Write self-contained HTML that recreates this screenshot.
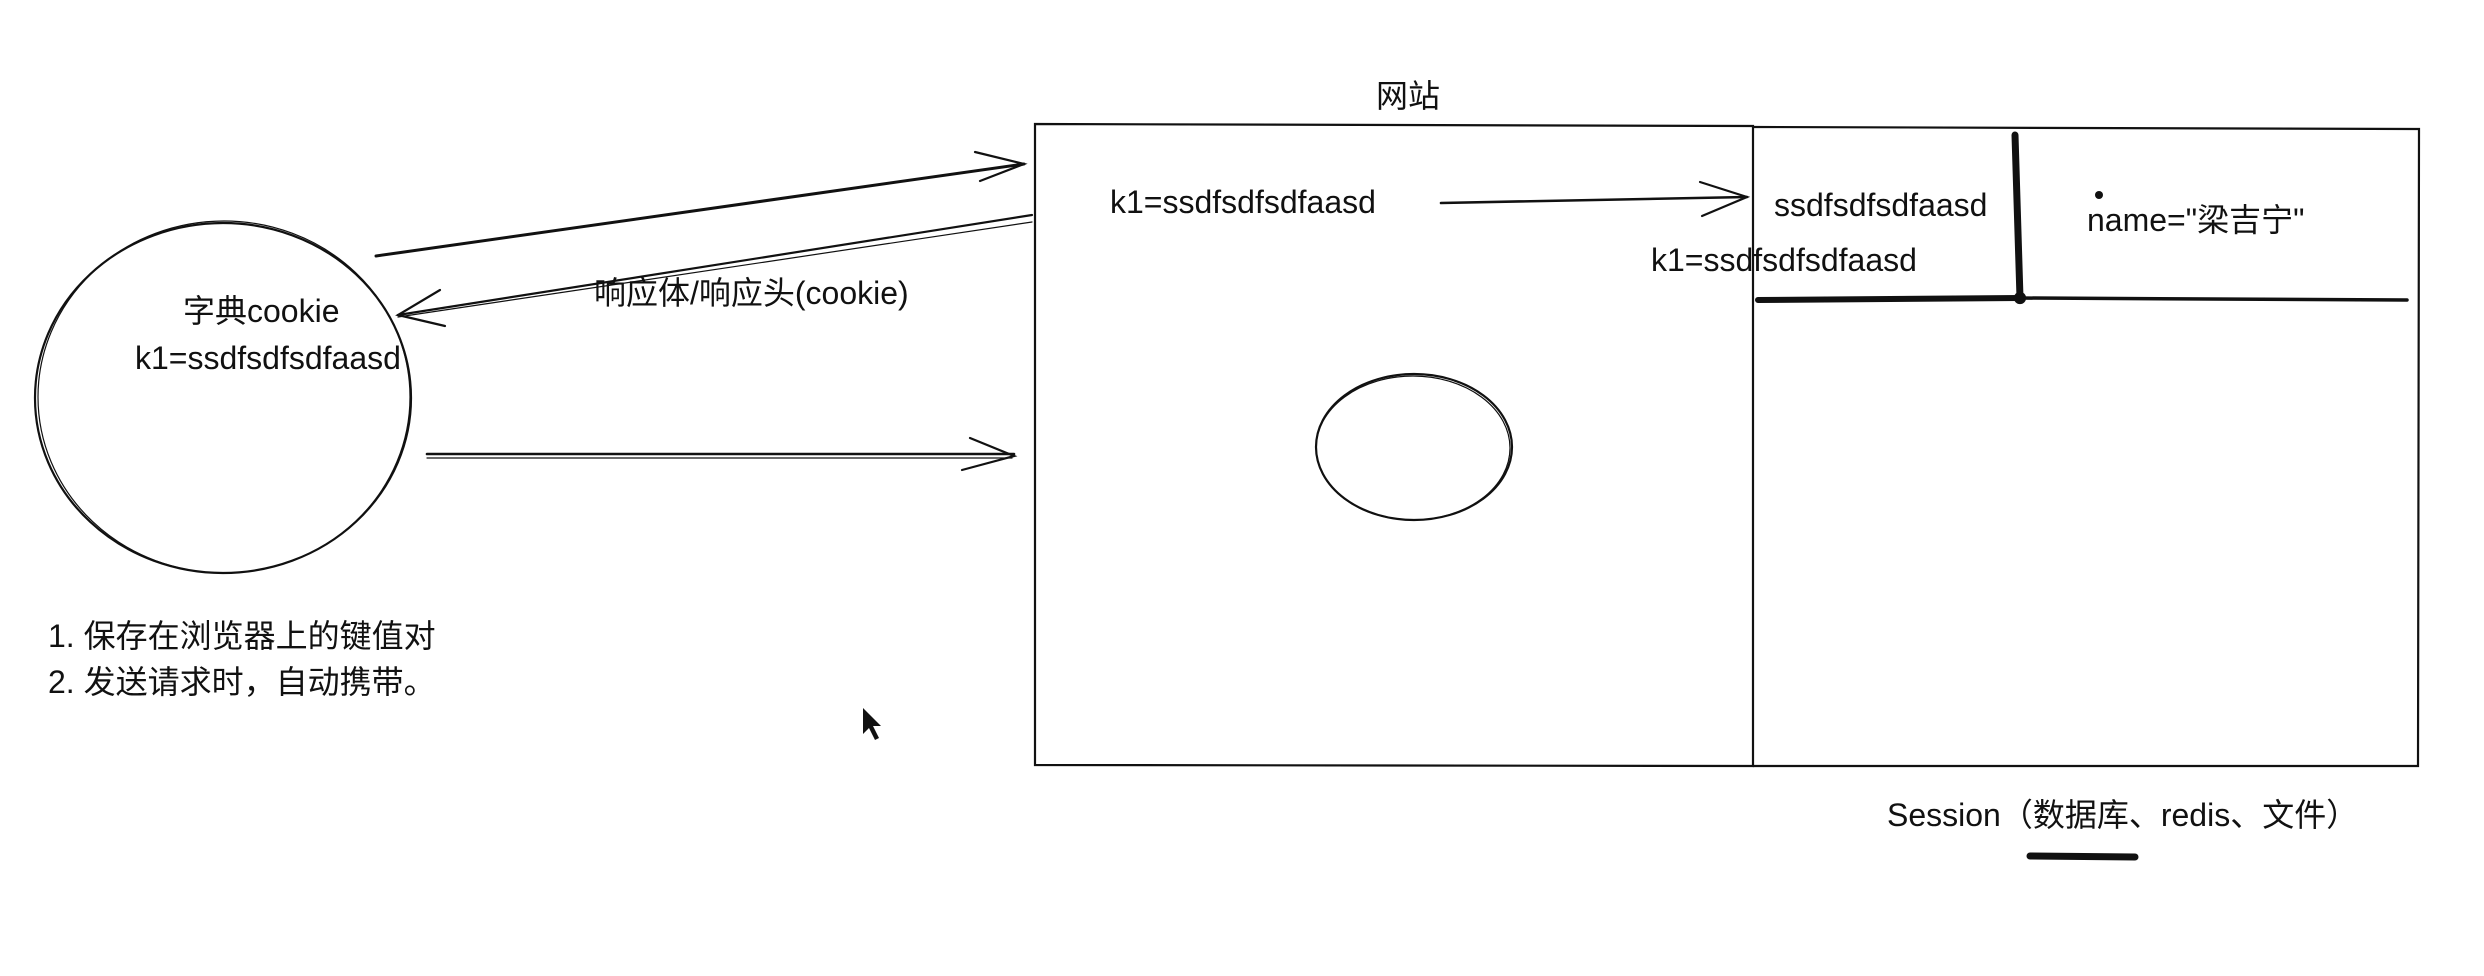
<!DOCTYPE html>
<html><head><meta charset="utf-8"><style>
html,body{margin:0;padding:0;background:#fff;}
svg{display:block}
text{font-family:"Liberation Sans","Noto Sans CJK SC",sans-serif;fill:#111;font-size:32px}
</style></head><body>
<svg width="2484" height="976" viewBox="0 0 2484 976" xmlns="http://www.w3.org/2000/svg">
<g fill="none" stroke="#111" stroke-width="2.2" stroke-linecap="round">
<ellipse cx="223" cy="398" rx="188" ry="175"/>
<ellipse cx="224" cy="397" rx="186" ry="176" stroke-width="1.2"/>
<path d="M376 256 L1024 164" stroke-width="3"/>
<path d="M975 152 L1024 164 L980 181"/>
<path d="M1032 215 L398 315"/>
<path d="M1032 222 L398 317" stroke-width="1.2"/>
<path d="M440 290 L398 315 L445 326"/>
<path d="M427 454 L1014 454" stroke-width="2.6"/>
<path d="M427 458 L1012 458" stroke-width="1.2"/>
<path d="M970 438 L1014 456 L962 470"/>
<path d="M1035 124 L1753 126 L1753 766 L1035 765 Z"/>
<path d="M1753 127 L2419 129 L2418 766 L1753 766"/>
<path d="M1441 203 L1747 197" stroke-width="2.6"/>
<path d="M1700 182 L1747 197 L1702 216"/>
<path d="M2015 135 L2020 298" stroke-width="7"/>
<path d="M1758 300 L2020 298" stroke-width="6"/>
<path d="M2020 298 L2407 300" stroke-width="3.5"/>
<circle cx="2020" cy="298" r="5" fill="#111"/>
<path d="M2030 856 L2135 857" stroke-width="7"/>
<ellipse cx="1414" cy="447" rx="98" ry="73"/>
<ellipse cx="1413" cy="448" rx="97" ry="72" stroke-width="1.2"/>
</g>
<circle cx="2099" cy="195" r="4" fill="#111"/>
<text x="183" y="322">字典cookie</text>
<text x="135" y="369">k1=ssdfsdfsdfaasd</text>
<text x="594" y="304">响应体/响应头(cookie)</text>
<text x="48" y="647">1. 保存在浏览器上的键值对</text>
<text x="48" y="693">2. 发送请求时，自动携带。</text>
<text x="1376" y="107">网站</text>
<text x="1110" y="213">k1=ssdfsdfsdfaasd</text>
<text x="1774" y="216">ssdfsdfsdfaasd</text>
<text x="1651" y="271">k1=ssdfsdfsdfaasd</text>
<text x="2087" y="231">name="梁吉宁"</text>
<text x="1887" y="826">Session（数据库、redis、文件）</text>
<path d="M863 708 L863 734 L869 728 L875 740 L879 738 L873 726 L881 726 Z" fill="#111"/>
</svg>
</body></html>
